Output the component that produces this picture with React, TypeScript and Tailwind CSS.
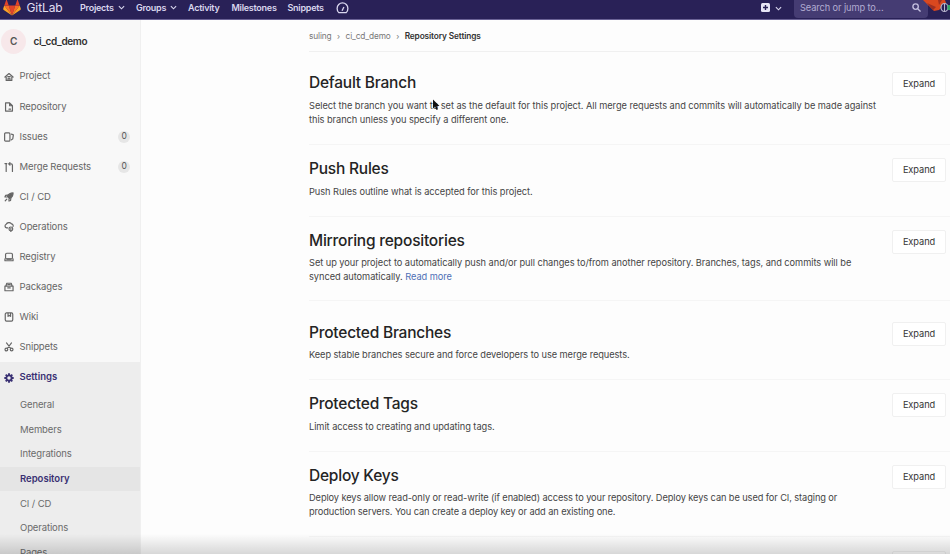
import type { ReactNode } from "react";

const stroke = {
  fill: "none",
  stroke: "currentColor",
  strokeWidth: 1.9,
  strokeLinejoin: "round" as const,
  strokeLinecap: "round" as const,
};

function Icon({ children }: { children: ReactNode }) {
  return (
    <svg viewBox="0 0 16 16" className="h-[10px] w-[10px] shrink-0" {...stroke}>
      {children}
    </svg>
  );
}

const nav: { label: string; badge?: boolean; icon: ReactNode }[] = [
  { label: "Project", icon: <><path d="M1.500 8 8 2.500 14.500 8M3.500 8v5.500h9V8" /><path d="M6.500 13.500V10h3v3.500M6 7.500h4" /></> },
  { label: "Repository", icon: <><path d="M3 1.500h6L13.500 6v8.500H2.500v-13zM9 1.500V6h4.500" /><path d="M8 11.500h2.500" /></> },
  { label: "Issues", badge: true, icon: <><rect x="1" y="1.500" width="8.500" height="13" rx="1.500" /><path d="M12 3.500 15 4.500 14 11l-2 1.500" /></> },
  { label: "Merge Requests", badge: true, icon: <><path d="M3.500 3v12M1.500 2.500h3M8 3h3.500q2 0 2 2V15M9.500 1 7.500 3 9.500 5" /></> },
  { label: "CI / CD", icon: <><path fill="currentColor" d="M14.500 1.500C10 1.500 7 4 5.500 7L9 10.500C12 9 14.500 6 14.500 1.500Z" /><path d="M6 5 2.500 5.500 1.500 8 5 8M11 10l-.5 3.500L8 14.500V11M4.500 11.500 2 14" /></> },
  { label: "Operations", icon: <><path d="M4 9.500A3.200 3.200 0 0 1 3.500 3.500 5 5 0 0 1 12 3a3 3 0 0 1 2.500 4M4 9.500h2" /><circle cx="11" cy="11" r="3" /><path d="M11 10v2M11 14v1.500" /></> },
  { label: "Registry", icon: <><rect x="2.500" y="2" width="11" height="9" rx="2" /><path d="M1.500 11v3h13v-3M5 11.500h6" /></> },
  { label: "Packages", icon: <><path d="M1.500 6.500h13v7.500h-13zM3 6.500 4.500 2h7L13 6.500" /><path d="M6 9.500h4M6 4h4" /></> },
  { label: "Wiki", icon: <><rect x="2" y="1.500" width="12" height="13" rx="2" /><path d="M6.500 2v5L8.500 5.500 10.500 7V2" /></> },
  { label: "Snippets", icon: <><path d="M4 1.500 10.500 10M12 1.500 5.500 10" /><circle cx="3.800" cy="12" r="2.200" /><circle cx="12.200" cy="12" r="2.200" /></> },
];

const subNav = ["General", "Members", "Integrations", "Repository", "CI / CD", "Operations", "Pages"];

const sections: { title: string; lines: string[]; more?: boolean; track: string; box: string }[] = [
  { title: "Default Branch", track: "tracking-[-0.045px]", box: "h-[93px] pt-5", lines: ["Select the branch you want to set as the default for this project. All merge requests and commits will automatically be made against", "this branch unless you specify a different one."] },
  { title: "Push Rules", track: "tracking-[-0.045px]", box: "h-[72px] pt-[13px]", lines: ["Push Rules outline what is accepted for this project."] },
  { title: "Mirroring repositories", track: "tracking-[-0.050px]", box: "h-[84px] pt-[12.500px]", lines: ["Set up your project to automatically push and/or pull changes to/from another repository. Branches, tags, and commits will be", "synced automatically. "], more: true },
  { title: "Protected Branches", track: "tracking-[-0.070px]", box: "h-[79px] pt-[20.500px]", lines: ["Keep stable branches secure and force developers to use merge requests."] },
  { title: "Protected Tags", track: "tracking-[-0.050px]", box: "h-[72px] pt-[13px]", lines: ["Limit access to creating and updating tags."] },
  { title: "Deploy Keys", track: "tracking-[-0.095px]", box: "h-[85px] pt-[12.500px]", lines: ["Deploy keys allow read-only or read-write (if enabled) access to your repository. Deploy keys can be used for CI, staging or", "production servers. You can create a deploy key or add an existing one."] },
  { title: "Deploy Tokens", track: "tracking-[-0.050px]", box: "h-[85px] pt-[14px]", lines: [] },
];

function Chevron() {
  return (
    <svg viewBox="0 0 8 8" className="mt-px h-[7px] w-[7px]" fill="none" stroke="currentColor" strokeWidth="1.3">
      <path d="M1 2.500 4 5.500 7 2.500" />
    </svg>
  );
}

function TopBar() {
  return (
    <header className="flex h-5 shrink-0 items-start overflow-hidden border-b border-[#6b6396] bg-[#292157] text-[#d9d6ee]">
      <div className="flex h-[15px] w-20 items-center pl-[3px]">
        <svg viewBox="0 0 36 34" className="h-[17px] w-[18px]">
          <path fill="#e24329" d="M18 33 24.500 13h-13z" />
          <path fill="#fc6d26" d="M18 33 11.500 13H2.500zM18 33l6.500-20h9z" />
          <path fill="#fca326" d="M2.500 13 .5 19q-.5 2 1 3L18 33zM33.500 13l2 6q.5 2-1 3L18 33z" />
          <path fill="#e24329" d="M2.500 13h9L7.500 1.500q-.5-1-1 0zM33.500 13h-9l4-11.500q.5-1 1 0z" />
        </svg>
        <span className="ml-[5.500px] text-[12px] leading-[15px] tracking-[-0.1px] text-[#e2dff2]">GitLab</span>
      </div>
      <nav className="flex h-[14px] items-center text-[9px] leading-none font-semibold tracking-[-0.250px]">
        <span className="flex w-14 items-center gap-[4px]">Projects <Chevron /></span>
        <span className="flex w-[52px] items-center gap-[4px]">Groups <Chevron /></span>
        <span className="w-[43.500px]">Activity</span>
        <span className="w-14">Milestones</span>
        <span className="w-[48.500px]">Snippets</span>
        <svg viewBox="0 0 14 14" className="h-[13px] w-[13px]" fill="none" stroke="currentColor" strokeWidth="1.4">
          <path d="M3 12.500Q1.200 10.800 1.200 8A5.800 6 0 0 1 12.800 8Q12.800 10.800 11 12.500z" />
          <path d="M6.500 10.500 8.500 6.500" />
        </svg>
      </nav>
      <div className="ml-auto flex h-[15px] items-center gap-[5px] pr-3">
        <svg viewBox="0 0 9 9" className="h-[9px] w-[9px]">
          <rect width="9" height="9" rx="1.500" fill="#e6e4f4" />
          <path d="M4.500 2v5M2 4.500h5" stroke="#292157" strokeWidth="1.400" />
        </svg>
        <Chevron />
      </div>
      <div className="flex h-[18px] w-[134px] items-center justify-between rounded-b-sm bg-[#453c73] pr-[7px] pb-[3px] pl-1.5 text-[9.250px] text-[#b2acd2]">
        <span className="tracking-[-0.1px]">Search or jump to...</span>
        <svg viewBox="0 0 10 10" className="h-[9px] w-[9px]" fill="none" stroke="#c4bfdf" strokeWidth="1.500">
          <circle cx="4" cy="4" r="3" />
          <path d="M6.300 6.300 9.500 9.500" />
        </svg>
      </div>
      <svg viewBox="0 0 27 18" className="-ml-[5px] h-[18px] w-[27px]">
        <path fill="#d9481f" d="M0 0h22l1 3-7 7-5 1z" />
        <path fill="#9e2f22" d="M4 3 13 7 10 10zM15 0h4l-3 5z" />
        <ellipse cx="21.500" cy="7.500" rx="3.500" ry="4" fill="#292157" stroke="#b9b6cf" strokeWidth="1.200" />
        <path d="M21.500 4v7" stroke="#b9b6cf" />
        <rect x="24.500" y="5" width="3" height="5" fill="#31a868" />
      </svg>
    </header>
  );
}

function Sidebar() {
  return (
    <aside className="flex w-[141px] shrink-0 flex-col border-r border-[#f0f0f0] bg-[#f8f8f8] text-[9.500px] tracking-[-0.120px] text-[#666]">
      <div className="flex h-[41.500px] shrink-0 items-center pt-0.5 pl-[1px]">
        <span className="flex h-[25px] w-[25px] items-center justify-center rounded-full bg-[#f7e8ea] text-[10px] font-semibold text-[#555]">C</span>
        <span className="ml-[7.500px] text-[10px] font-semibold tracking-[-0.350px] text-[#303030]">ci_cd_demo</span>
      </div>
      {nav.map((item) => (
        <div key={item.label} className="flex h-[30.100px] shrink-0 items-center pl-1">
          <Icon>{item.icon}</Icon>
          <span className="ml-[5.500px]">{item.label}</span>
          {item.badge && (
            <span className="mr-[10px] ml-auto flex h-3 w-3 items-center justify-center rounded-full bg-[#e6e6e6] text-[8.500px] text-[#555]">0</span>
          )}
        </div>
      ))}
      <div className="flex-1 bg-[#ededed]">
        <div className="flex h-[30.200px] items-center pl-1 font-semibold text-[#393073]">
          <svg viewBox="0 0 16 16" className="h-[10px] w-[10px]" fill="none" stroke="currentColor">
            <circle cx="8" cy="8" r="4.200" strokeWidth="3" />
            <path strokeWidth="3" d="M8 .5v3M8 12.500v3M.5 8h3M12.500 8h3M2.700 2.700l2 2M11.300 11.300l2 2M2.700 13.300l2-2M11.300 4.700l2-2" />
          </svg>
          <span className="ml-[5.500px] tracking-[0px]">Settings</span>
        </div>
        {subNav.map((label) => (
          <div
            key={label}
            className={`flex h-[24.700px] items-center pl-5 ${label === "Repository" ? "bg-[#e5e5e5] font-semibold tracking-[0px] text-[#393073]" : "text-[#6b6b6b]"}`}
          >
            {label}
          </div>
        ))}
      </div>
    </aside>
  );
}

export default function App() {
  return (
    <div className="relative flex h-[554px] w-[950px] flex-col overflow-hidden bg-[#fdfdfd] font-['Inter','Liberation_Sans',sans-serif]">
      <TopBar />
      <div className="flex h-[534px] shrink-0 overflow-hidden">
        <Sidebar />
        <main className="min-w-0 flex-1 pl-[168px]">
          <div className="flex h-8 items-center border-b border-[#f0f0f0] pt-[1.500px] text-[8.300px] tracking-[-0.120px] text-[#777]">
            <span>suling</span>
            <span className="mx-[5.500px] text-[8px]">›</span>
            <span>ci_cd_demo</span>
            <span className="mx-[5.500px] text-[8px]">›</span>
            <span className="font-semibold text-[#333]">Repository Settings</span>
          </div>
          {sections.map((s) => (
            <section key={s.title} className={`flex items-start justify-between border-b border-[#f5f5f5] pr-1 ${s.box}`}>
              <div>
                <h2 className="h-[26px] text-[15.500px] leading-[22px] font-medium tracking-[-0.220px] whitespace-nowrap text-[#242424]">{s.title}</h2>
                {s.lines.map((line, i) => (
                  <p key={line} className={`relative top-[0.500px] text-[9.250px] leading-[14px] whitespace-nowrap text-[#444] ${s.track}`}>
                    {line}
                    {s.more && i === 1 && <a className="text-[#4d6fb5]">Read more</a>}
                  </p>
                ))}
              </div>
              <button className="h-6 w-[54px] shrink-0 rounded-[2px] border border-[#f0f0f0] bg-white text-[9.250px] tracking-[-0.080px] text-[#333]">Expand</button>
            </section>
          ))}
        </main>
      </div>
      <div className="pointer-events-none absolute inset-x-0 bottom-0 h-5 bg-linear-to-b from-transparent to-black/15" />
      <svg viewBox="0 0 8 12" className="absolute top-[99px] left-[432px] h-3 w-2">
        <path d="M1 .5v9l2-2 1.500 3.500L6 10.300 4.600 7H7.500z" fill="#111" />
      </svg>
    </div>
  );
}
